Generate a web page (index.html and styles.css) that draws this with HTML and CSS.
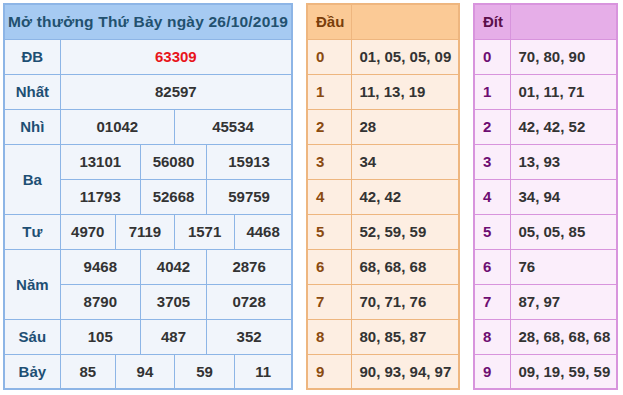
FILE: index.html
```html
<!DOCTYPE html>
<html lang="vi">
<head>
  <meta charset="UTF-8">
  <title>Kết quả xổ số 26/10/2019</title>
  <link rel="stylesheet" href="styles.css">
</head>
<body>
  <div class="wrap">
    <!-- bang ket qua -->
    <table class="kq">
      <colgroup>
        <col class="c-lbl">
        <col class="c1"><col class="c2"><col class="c3"><col class="c4"><col class="c5"><col class="c6">
      </colgroup>
      <tr><th colspan="7" class="title">Mở thưởng Thứ Bảy ngày 26/10/2019</th></tr>
      <tr><td class="lbl">ĐB</td><td colspan="6" class="db">63309</td></tr>
      <tr><td class="lbl">Nhất</td><td colspan="6">82597</td></tr>
      <tr><td class="lbl">Nhì</td><td colspan="3">01042</td><td colspan="3">45534</td></tr>
      <tr><td class="lbl" rowspan="2">Ba</td><td colspan="2">13101</td><td colspan="2">56080</td><td colspan="2">15913</td></tr>
      <tr><td colspan="2">11793</td><td colspan="2">52668</td><td colspan="2">59759</td></tr>
      <tr><td class="lbl">Tư</td><td>4970</td><td colspan="2">7119</td><td colspan="2">1571</td><td>4468</td></tr>
      <tr><td class="lbl" rowspan="2">Năm</td><td colspan="2">9468</td><td colspan="2">4042</td><td colspan="2">2876</td></tr>
      <tr><td colspan="2">8790</td><td colspan="2">3705</td><td colspan="2">0728</td></tr>
      <tr><td class="lbl">Sáu</td><td colspan="2">105</td><td colspan="2">487</td><td colspan="2">352</td></tr>
      <tr><td class="lbl">Bảy</td><td>85</td><td colspan="2">94</td><td colspan="2">59</td><td>11</td></tr>
    </table>

    <!-- loto dau -->
    <table class="loto dau">
      <colgroup><col class="c-so"><col></colgroup>
      <tr><th>Đầu</th><th></th></tr>
      <tr><td class="so">0</td><td>01, 05, 05, 09</td></tr>
      <tr><td class="so">1</td><td>11, 13, 19</td></tr>
      <tr><td class="so">2</td><td>28</td></tr>
      <tr><td class="so">3</td><td>34</td></tr>
      <tr><td class="so">4</td><td>42, 42</td></tr>
      <tr><td class="so">5</td><td>52, 59, 59</td></tr>
      <tr><td class="so">6</td><td>68, 68, 68</td></tr>
      <tr><td class="so">7</td><td>70, 71, 76</td></tr>
      <tr><td class="so">8</td><td>80, 85, 87</td></tr>
      <tr><td class="so">9</td><td>90, 93, 94, 97</td></tr>
    </table>

    <!-- loto dit -->
    <table class="loto dit">
      <colgroup><col class="c-so"><col></colgroup>
      <tr><th>Đít</th><th></th></tr>
      <tr><td class="so">0</td><td>70, 80, 90</td></tr>
      <tr><td class="so">1</td><td>01, 11, 71</td></tr>
      <tr><td class="so">2</td><td>42, 42, 52</td></tr>
      <tr><td class="so">3</td><td>13, 93</td></tr>
      <tr><td class="so">4</td><td>34, 94</td></tr>
      <tr><td class="so">5</td><td>05, 05, 85</td></tr>
      <tr><td class="so">6</td><td>76</td></tr>
      <tr><td class="so">7</td><td>87, 97</td></tr>
      <tr><td class="so">8</td><td>28, 68, 68, 68</td></tr>
      <tr><td class="so">9</td><td>09, 19, 59, 59</td></tr>
    </table>
  </div>
</body>
</html>
```

FILE: styles.css
```css
* { margin: 0; padding: 0; box-sizing: border-box; }
body {
  font-family: 'Liberation Sans', Arial, sans-serif;
  background: #fff;
  padding: 3px;
}
.wrap {
  display: flex;
  align-items: flex-start;
  gap: 13px;
}
table {
  border-collapse: collapse;
  table-layout: fixed;
  font-size: 15px;
  font-weight: 700;
  color: #333;
}
tr { height: 35px; }

/* bang ket qua */
.kq {
  width: 290px;
  background: #f1f5fb;
  border: 2px solid #8db5e6;
}
.kq .c-lbl { width: 56px; }
.kq .c1 { width: 55px; }
.kq .c2 { width: 25px; }
.kq .c3 { width: 34px; }
.kq .c4 { width: 32px; }
.kq .c5 { width: 28px; }
.kq .c6 { width: 57px; }
.kq td, .kq th {
  border: 1px solid #8db5e6;
  text-align: center;
}
.kq .title {
  background: #a6caf2;
  color: #22516f;
  font-size: 15.5px;
  letter-spacing: 0.2px;
}
.kq .lbl { color: #1e4f74; }
.kq .db { color: #e8141a; }

/* loto */
.loto td, .loto th {
  text-align: left;
  padding-left: 8px;
}
.dau {
  width: 154px;
  background: #fdeee2;
  border: 2px solid #eeb67f;
}
.dau .c-so { width: 44px; }
.dau td, .dau th { border: 1px solid #eeb67f; }
.dau th { background: #fbca96; color: #7a3e0a; }
.dau .so { color: #8a4a10; }

.dit {
  width: 145px;
  background: #fbeefb;
  border: 2px solid #d894dd;
}
.dit .c-so { width: 36px; }
.dit td, .dit th { border: 1px solid #d894dd; }
.dit th { background: #e6aee8; color: #5a0f4a; }
.dit .so { color: #6e0d72; }
```
